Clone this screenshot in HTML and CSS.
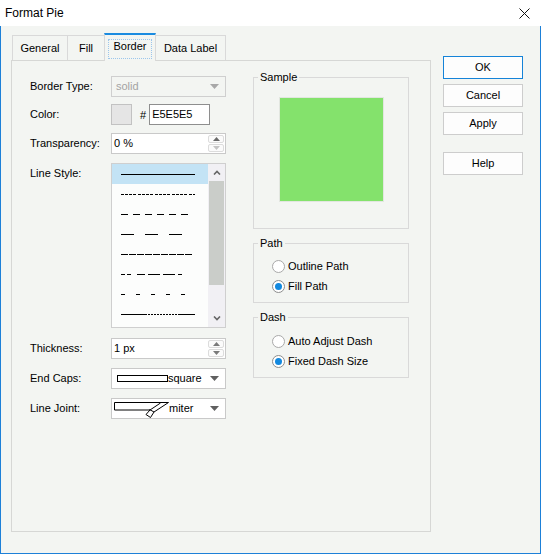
FILE: index.html
```html
<!DOCTYPE html>
<html>
<head>
<meta charset="utf-8">
<title>Format Pie</title>
<link rel="stylesheet" href="styles.css">
</head>
<body>
<div class="window">
  <div class="titlebar">
    <span class="title">Format Pie</span>
    <svg class="close" width="11" height="11" viewBox="0 0 11 11"><path d="M0.5 0.5L10.5 10.5M10.5 0.5L0.5 10.5" stroke="#111" stroke-width="1"/></svg>
  </div>
  <div class="body">
    <div class="tabarea">
      <div class="tabs">
        <div class="tab tab-general">General</div>
        <div class="tab tab-fill">Fill</div>
        <div class="tab tab-border active"><span class="focus">Border</span></div>
        <div class="tab tab-label">Data Label</div>
      </div>
      <div class="panel">
        <div class="leftcol">
          <div class="lbl">Border Type:</div>
          <div class="combo disabled">
            <span class="combo-text">solid</span>
            <svg class="arrow" width="9" height="5" viewBox="0 0 9 5"><path d="M0 0H9L4.5 5Z" fill="#a8a8a8"/></svg>
          </div>

          <div class="lbl">Color:</div>
          <div class="colorrow">
            <span class="swatch"></span>
            <span class="hash">#</span>
            <span class="hexinput">E5E5E5</span>
          </div>

          <div class="lbl">Transparency:</div>
          <div class="spinner">
            <span class="spin-text">0 %</span>
            <span class="spin-btns">
              <span class="spin-btn"><svg width="7" height="4" viewBox="0 0 7 4"><path d="M0 4H7L3.5 0Z" fill="#6a6a6a"/></svg></span>
              <span class="spin-btn"><svg width="7" height="4" viewBox="0 0 7 4"><path d="M0 0H7L3.5 4Z" fill="#c4c4c4"/></svg></span>
            </span>
          </div>

          <div class="lbl">Line Style:</div>
          <div class="listbox">
            <div class="rows">
              <div class="row selected"><svg class="dash" width="74" height="1"><line x1="0" y1="0.5" x2="74" y2="0.5" stroke="#000"/></svg></div>
              <div class="row"><svg class="dash" width="74" height="1"><line x1="0" y1="0.5" x2="74" y2="0.5" stroke="#000" stroke-dasharray="3 1 3 1 3 1 3 2"/></svg></div>
              <div class="row"><svg class="dash" width="74" height="1"><line x1="0" y1="0.5" x2="68" y2="0.5" stroke="#000" stroke-dasharray="7 5"/></svg></div>
              <div class="row"><svg class="dash" width="74" height="1"><line x1="0" y1="0.5" x2="62" y2="0.5" stroke="#000" stroke-dasharray="13 11"/></svg></div>
              <div class="row"><svg class="dash" width="74" height="1"><line x1="0" y1="0.5" x2="72" y2="0.5" stroke="#000" stroke-dasharray="7 1"/></svg></div>
              <div class="row"><svg class="dash" width="74" height="1"><line x1="0" y1="0.5" x2="70" y2="0.5" stroke="#000" stroke-dasharray="4 2 4 6 8 3 12 3 12 3 4 20"/></svg></div>
              <div class="row"><svg class="dash" width="74" height="1"><line x1="0" y1="0.5" x2="66" y2="0.5" stroke="#000" stroke-dasharray="4 11"/></svg></div>
              <div class="row"><svg class="dash" width="74" height="1"><line x1="0" y1="0.5" x2="74" y2="0.5" stroke="#000" stroke-dasharray="26 1 2 1 2 1 2 1 2 1 2 1 2 1 2 1 2 1 2 1 2 1 22"/></svg></div>
            </div>
            <div class="scrollbar">
              <div class="sb-btn"><svg width="8" height="5" viewBox="0 0 8 5"><path d="M1 4.5L4 1.5L7 4.5" fill="none" stroke="#666" stroke-width="1.6"/></svg></div>
              <div class="sb-thumb"></div>
              <div class="sb-track"></div>
              <div class="sb-btn"><svg width="8" height="5" viewBox="0 0 8 5"><path d="M1 0.5L4 3.5L7 0.5" fill="none" stroke="#666" stroke-width="1.6"/></svg></div>
            </div>
          </div>

          <div class="lbl">Thickness:</div>
          <div class="spinner">
            <span class="spin-text">1 px</span>
            <span class="spin-btns">
              <span class="spin-btn"><svg width="7" height="4" viewBox="0 0 7 4"><path d="M0 4H7L3.5 0Z" fill="#7a7a7a"/></svg></span>
              <span class="spin-btn"><svg width="7" height="4" viewBox="0 0 7 4"><path d="M0 0H7L3.5 4Z" fill="#7a7a7a"/></svg></span>
            </span>
          </div>

          <div class="lbl">End Caps:</div>
          <div class="combo">
            <svg class="preview-caps" width="51" height="7" viewBox="0 0 51 7"><rect x="0.5" y="0.5" width="50" height="6" fill="#fff" stroke="#000"/></svg>
            <span class="combo-text">square</span>
            <svg class="arrow" width="9" height="5" viewBox="0 0 9 5"><path d="M0 0H9L4.5 5Z" fill="#606060"/></svg>
          </div>

          <div class="lbl">Line Joint:</div>
          <div class="combo">
            <svg class="preview-joint" width="56" height="20" viewBox="0 0 56 20"><path d="M1.5 3.5H55.5L41 13L37.5 18.5L33 15.5L37 11H1.5Z" fill="#fff" stroke="#000"/><path d="M37 11L47.5 4M41 13L36.5 10.5" stroke="#000" fill="none"/></svg>
            <span class="combo-text">miter</span>
            <svg class="arrow" width="9" height="5" viewBox="0 0 9 5"><path d="M0 0H9L4.5 5Z" fill="#606060"/></svg>
          </div>
        </div>

        <div class="rightcol">
          <fieldset class="group sample">
            <legend>Sample</legend>
            <div class="sample-box"></div>
          </fieldset>
          <fieldset class="group">
            <legend>Path</legend>
            <div class="options">
              <div class="opt"><span class="radio"></span>Outline Path</div>
              <div class="opt"><span class="radio checked"></span>Fill Path</div>
            </div>
          </fieldset>
          <fieldset class="group">
            <legend>Dash</legend>
            <div class="options loose">
              <div class="opt"><span class="radio"></span>Auto Adjust Dash</div>
              <div class="opt"><span class="radio checked"></span>Fixed Dash Size</div>
            </div>
          </fieldset>
        </div>
      </div>
    </div>
    <div class="buttons">
      <div class="btn default">OK</div>
      <div class="btn">Cancel</div>
      <div class="btn">Apply</div>
      <div class="btn help">Help</div>
    </div>
  </div>
</div>
</body>
</html>
```

FILE: styles.css
```css
* { box-sizing: border-box; }
html, body { margin: 0; padding: 0; }
body {
  font-family: "Liberation Sans", Arial, sans-serif;
  font-size: 11px;
  color: #000;
  background: #fff;
}
.window {
  width: 541px;
  height: 554px;
  display: flex;
  flex-direction: column;
}
.titlebar {
  height: 26px;
  flex: none;
  background: #fff;
  display: flex;
  align-items: center;
  justify-content: space-between;
  padding: 0 11px 0 5px;
}
.title { font-size: 12px; }
.close { display: block; margin-top: 1px; }

.body {
  flex: 1;
  display: flex;
  align-items: flex-start;
  background: #f3f5f2;
  border: 1px solid #1d80d8;
  border-top: none;
  padding: 7px 0 0 10px;
}
.tabarea {
  width: 420px;
  display: flex;
  flex-direction: column;
}
.tabs {
  display: flex;
  align-items: flex-end;
  height: 27px;
  margin-left: 1px;
}
.tab {
  height: 25px;
  line-height: 24px;
  text-align: center;
  border-top: 1px solid #d9d9d9;
  border-left: 1px solid #d9d9d9;
  background: #f3f5f2;
}
.tab-general { width: 55px; }
.tab-fill { width: 37px; }
.tab-border { width: 52px; }
.tab-label { width: 70px; border-left: none; border-right: 1px solid #d9d9d9; }
.tab.active {
  height: 28px;
  margin-bottom: -1px;
  border-top: 2px solid #1a8be0;
  border-right: 1px solid #d9d9d9;
  position: relative;
  z-index: 1;
  padding: 4px 3px 0;
}
.focus {
  display: block;
  height: 20px;
  line-height: 13px;
  border: 1px dotted #9cc6ec;
}

.panel {
  height: 472px;
  border: 1px solid #d6d7d5;
  display: flex;
  align-items: flex-start;
}
.leftcol {
  padding: 15px 0 0 18px;
  display: grid;
  grid-template-columns: 81px 115px;
  grid-template-rows: 28px 29px 30px 175px 30px 30px 21px;
  align-items: start;
}
.lbl {
  height: 21px;
  line-height: 21px;
  white-space: nowrap;
}
.combo {
  height: 21px;
  border: 1px solid #c9c9c9;
  background: #fff;
  display: flex;
  align-items: center;
  padding-left: 4px;
}
.combo.disabled { background: #f3f5f2; border-color: #cfcfcf; color: #a3a3a3; }
.combo-text { flex: 1; line-height: 19px; }
.arrow { display: block; margin-right: 6px; flex: none; }
.preview-caps { display: block; flex: none; margin: 0 0 0 1px; }
.preview-joint { display: block; flex: none; margin: 0 0 0 -3px; }

.colorrow {
  display: flex;
  align-items: center;
  height: 21px;
}
.swatch {
  width: 21px;
  height: 21px;
  border: 1px solid #c2c2c2;
  background: #e5e5e5;
}
.hash { margin-left: 8px; }
.hexinput {
  margin-left: 3px;
  width: 61px;
  height: 21px;
  border: 1px solid #8e8e8e;
  background: #fff;
  padding-left: 2px;
  line-height: 19px;
}

.spinner {
  height: 21px;
  border: 1px solid #c9c9c9;
  background: #fff;
  display: flex;
  align-items: stretch;
  padding-left: 2px;
}
.spin-text { flex: 1; line-height: 19px; }
.spin-btns {
  width: 17px;
  display: flex;
  flex-direction: column;
  padding: 1px 1px 1px 0;
  gap: 1px;
}
.spin-btn {
  flex: 1;
  border: 1px solid #dcdcdc;
  border-radius: 2px;
  display: flex;
  align-items: center;
  justify-content: center;
  background: #fbfbfb;
}
.spin-btn svg { display: block; }

.listbox {
  height: 165px;
  border: 1px solid #cfcfcf;
  background: #fcfdfc;
  display: flex;
}
.rows { flex: 1; }
.row {
  height: 20px;
  display: flex;
  align-items: center;
  padding-left: 9px;
}
.row.selected { background: #c3e3f5; }
.dash { display: block; shape-rendering: crispEdges; }
.scrollbar {
  width: 17px;
  background: #f1f0f4;
  display: flex;
  flex-direction: column;
}
.sb-btn {
  height: 17px;
  display: flex;
  align-items: center;
  justify-content: center;
}
.sb-btn svg { display: block; }
.sb-thumb {
  height: 104px;
  margin: 0 1px;
  background: #cacdc9;
}
.sb-track { flex: 1; }

.rightcol {
  width: 156px;
  margin-left: 27px;
  padding-top: 10px;
  display: flex;
  flex-direction: column;
}
.group {
  margin: 0;
  padding: 0;
  border: 1px solid #d9d9d9;
  min-inline-size: 0;
}
.group + .group { margin-top: 8px; }
.group legend {
  padding: 0 2px;
  margin-left: 4px;
  line-height: 13px;
  font-size: 11px;
}
.sample { padding-bottom: 26px; }
.sample-box {
  width: 105px;
  height: 105px;
  margin: 13px auto 0;
  background: #84e26c;
  border: 1px solid #e2e6e0;
}
.options {
  padding: 6px 0 6px 18px;
}
.options.loose { padding-top: 7px; }
.opt {
  height: 20px;
  display: flex;
  align-items: center;
  gap: 3px;
}
.radio {
  width: 13px;
  height: 13px;
  border: 1px solid #a9a9a9;
  border-radius: 50%;
  background: #fff;
  display: flex;
  align-items: center;
  justify-content: center;
}
.radio.checked { border-color: #8d8d8d; }
.radio.checked::after {
  content: "";
  width: 7px;
  height: 7px;
  border-radius: 50%;
  background: #1389df;
}

.buttons {
  width: 80px;
  margin-left: 12px;
  margin-top: 23px;
  display: flex;
  flex-direction: column;
  gap: 5px;
}
.btn {
  height: 23px;
  line-height: 21px;
  text-align: center;
  border: 1px solid #cdcdcd;
  background: #fdfdfd;
}
.btn.default { border-color: #1583d8; }
.btn.help { margin-top: 12px; }
```
